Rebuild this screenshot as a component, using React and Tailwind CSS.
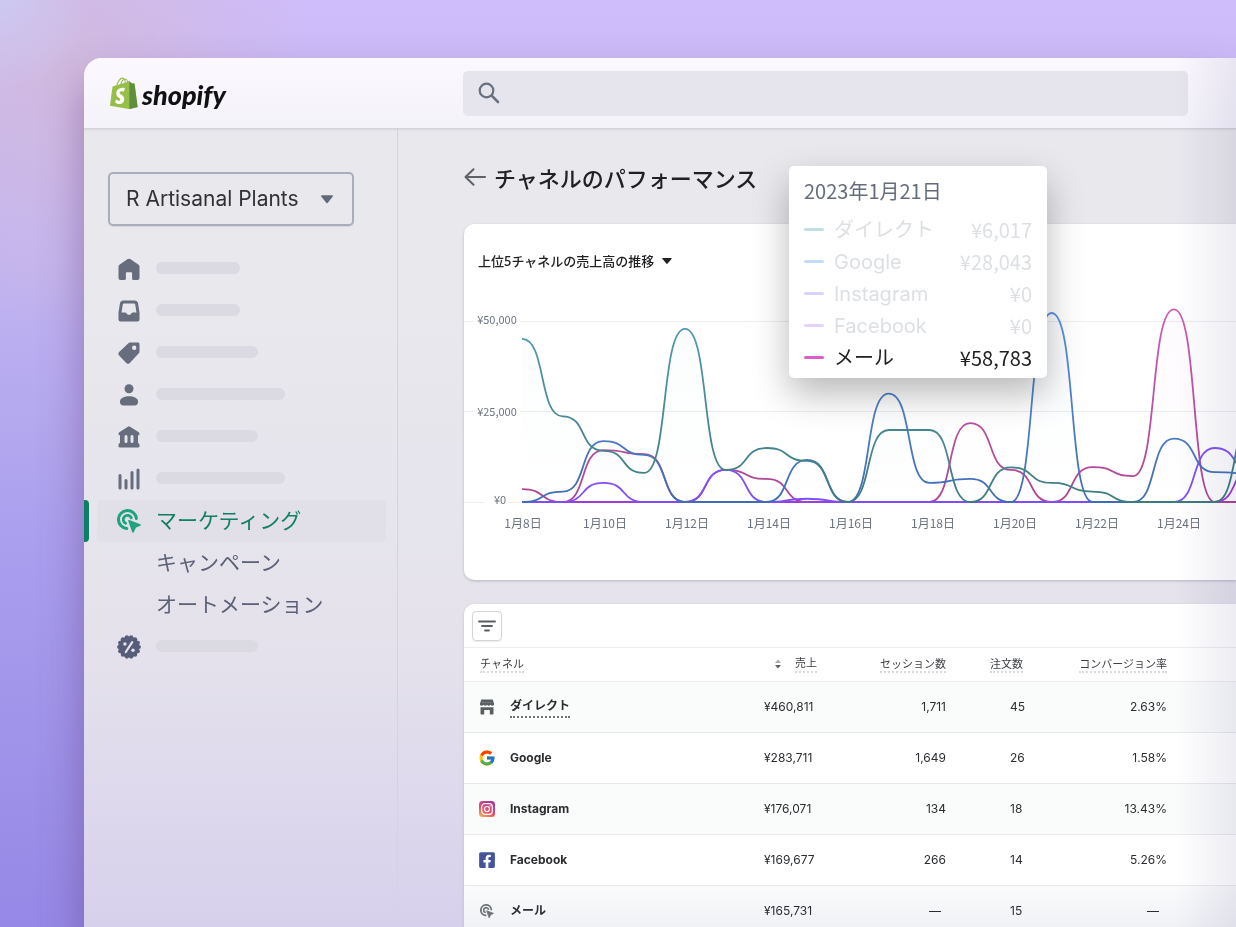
import React from "react";
import { FcGoogle } from "react-icons/fc";
import { FaFacebookSquare } from "react-icons/fa";

const series = [
  {
    id: "mail",
    values: [3.6, 0, 14.4, 13.3, 0, 8.9, 6.4, 0, 0, 0, 0, 21.9, 8.9, 0, 9.7, 7.2, 53.5, 0, 0],
    top: "#cc5cb8",
    bottom: "#ad4593",
  },
  {
    id: "facebook",
    values: [0, 0, 0, 0, 0, 0, 0, 0, 0, 0, 0, 0, 0, 0, 0, 0, 0, 0, 10.5],
    top: "#a855e8",
    bottom: "#9b3fdb",
  },
  {
    id: "instagram",
    values: [0, 0, 5.3, 0, 0, 8.9, 0, 0.9, 0, 0, 0, 0, 0, 0, 0, 0, 0, 15, 7.8],
    top: "#8a63ff",
    bottom: "#7f4df7",
  },
  {
    id: "google",
    values: [0, 2.9, 16.9, 13.1, 0, 0, 0, 11.7, 0, 30.1, 5.3, 6.4, 0, 52.5, 0, 0, 17.6, 8.3, 7.8],
    top: "#5a93e0",
    bottom: "#3f6db5",
  },
  {
    id: "direct",
    values: [45.3, 23.8, 14.2, 8.1, 48.1, 8.9, 15, 11.4, 0, 20, 20, 0, 9.6, 5.3, 2.9, 0, 0, 0, 25],
    top: "#559bb5",
    bottom: "#3d7b7d",
  },
];

const tooltipRows = [
  { name: "ダイレクト", amount: "¥6,017", dash: "bg-[#c0dfe4]", text: "text-[#dcdfe3]" },
  { name: "Google", amount: "¥28,043", dash: "bg-[#c3dcf8]", text: "text-[#dcdfe3]" },
  { name: "Instagram", amount: "¥0", dash: "bg-[#d9d2fb]", text: "text-[#dcdfe3]" },
  { name: "Facebook", amount: "¥0", dash: "bg-[#e5d2f8]", text: "text-[#dcdfe3]" },
  { name: "メール", amount: "¥58,783", dash: "bg-[#d95fc6]", text: "text-[#202123]" },
];

const BASE = 229;
const LEFT = 58;
const STEP = 40.75;

const linePath = (values) =>
  values
    .map((v, i) => {
      const x = LEFT + i * STEP;
      const y = BASE - v * 3.6;
      if (i === 0) return `M${x} ${y}`;
      const prevX = x - STEP;
      const prevY = BASE - values[i - 1] * 3.6;
      return `C${prevX + STEP * 0.6} ${prevY} ${x - STEP * 0.6} ${y} ${x} ${y}`;
    })
    .join("");

const Logo = () => (
  <a href="#home" aria-label="shopify" className="flex items-center gap-1">
    <svg viewBox="0 2 109 125" className="h-8 w-7">
      <path
        fill="#95bf47"
        fillRule="evenodd"
        d="M95.6 28.2c-.1-.6-.6-1-1.1-1-.5 0-9.3-.2-9.3-.2s-7.4-7.2-8.1-7.9c-.7-.7-2.2-.5-2.7-.3 0 0-1.4.4-3.7 1.1-.4-1.3-1-2.8-1.8-4.4-2.6-5-6.5-7.7-11.1-7.7-.3 0-.6 0-1 .1-.1-.2-.3-.3-.4-.5-2-2.2-4.6-3.2-7.7-3.1-6 .2-12 4.5-16.8 12.2-3.4 5.4-6 12.2-6.8 17.5-6.9 2.1-11.7 3.6-11.8 3.7-3.5 1.1-3.6 1.2-4 4.5C9 44.7 0 114.2 0 114.2l75.6 13.1 32.8-8.1S95.7 28.8 95.6 28.2zM67.2 21.2c-1.7.5-3.7 1.1-5.8 1.8 0-3-.4-7.3-1.8-10.9 4.6.8 6.8 6 7.6 9.1zM57.5 24.2c-4 1.2-8.3 2.6-12.7 3.9 1.2-4.7 3.6-9.4 6.4-12.5 1.1-1.1 2.6-2.4 4.3-3.2 1.7 3.6 2.1 8.6 2 11.8zM49.3 8.5c1.4 0 2.6.3 3.6 1-1.6.8-3.2 2.1-4.7 3.6-3.8 4.1-6.7 10.5-7.9 16.6-3.6 1.1-7.2 2.2-10.5 3.2C31.9 23.4 40.1 8.7 49.3 8.5z"
      />
      <path
        fill="#5e8e3e"
        d="M94.5 27.2c-.5 0-9.3-.2-9.3-.2s-7.4-7.2-8.1-7.9c-.3-.3-.7-.5-1.5-.5v108.7l32.8-8.1S95.7 28.8 95.6 28.2c-.1-.6-.6-1-1.1-1z"
      />
      <path
        fill="#fff"
        d="M58 44.9l-3.8 14.4s-4.3-2-9.4-1.6c-7.5.5-7.5 5.2-7.5 6.4.4 6.4 17.3 7.8 18.3 22.9.7 11.9-6.3 20-16.4 20.6-12.2.8-18.9-6.4-18.9-6.4l2.6-11s6.7 5.1 12.1 4.7c3.5-.2 4.8-3.1 4.7-5.1-.5-8.4-14.3-7.9-15.2-21.7-.7-11.6 6.9-23.4 23.7-24.4 6.6-.5 9.8 1.2 9.8 1.2z"
      />
    </svg>
    <span className="pt-1 font-['Lato',sans-serif] text-[27px] leading-8 font-black text-[#111] italic">shopify</span>
  </a>
);

const HomeIcon = () => (
  <svg viewBox="0 0 24 24" className="h-6 w-6" fill="currentColor">
    <path d="M10.7 2.1a2.4 2.4 0 0 1 2.6 0l7.9 5.3c.9.6 1.3 1.4 1.3 2.4V21a2 2 0 0 1-2 2h-4.2c-.7 0-1.2-.5-1.2-1.2v-5.6c0-.6-.4-1-1-1H9.900c-.6 0-1 .4-1 1v5.600c0 .7-.5 1.200-1.200 1.200H3.500a2 2 0 0 1-2-2V9.800c0-1 .4-1.800 1.300-2.400z" />
  </svg>
);

const InboxIcon = () => (
  <svg viewBox="0 0 24 24" className="h-6 w-6" fill="currentColor" fillRule="evenodd">
    <path d="M6.500 1.500h11c1.900 0 3.300 1.100 3.600 2.900l1.400 9.100V20.500a2 2 0 0 1-2 2h-17a2 2 0 0 1-2-2V13.500l1.400-9.100c.3-1.800 1.700-2.900 3.600-2.900zM7.100 4.500c-.7 0-1.200.4-1.300 1.100L4.500 13.600h3.700c.7 0 1.100.3 1.400.8.5.9 1.300 1.400 2.400 1.400s1.900-.5 2.400-1.400c.3-.5.7-.8 1.400-.8h3.700l-1.300-8c-.1-.7-.6-1.100-1.300-1.100z" />
  </svg>
);

const TagIcon = () => (
  <svg viewBox="0 0 24 24" className="h-6 w-6" fill="currentColor" fillRule="evenodd">
    <path d="M11.700 2.100c.5-.5 1.100-.6 1.800-.6h7.300c1 0 1.700.7 1.700 1.700v7.300c0 .7-.2 1.300-.7 1.800l-9 9.600a2.400 2.400 0 0 1-3.500 0l-7.200-7.500a2.300 2.300 0 0 1 0-3.300zM17.200 4.600a2.200 2.200 0 1 0 0 4.400 2.200 2.200 0 0 0 0-4.400z" />
  </svg>
);

const PersonIcon = () => (
  <svg viewBox="0 0 24 24" className="h-6 w-6" fill="currentColor">
    <circle cx="12" cy="5.800" r="4.500" />
    <path d="M3 18.200c0-3.300 5-5 9-5s9 1.700 9 5v.8c0 2-1.300 3.500-3.300 3.500H6.300C4.300 22.500 3 21 3 19z" />
  </svg>
);

const BankIcon = () => (
  <svg viewBox="0 0 24 24" className="h-6 w-6" fill="currentColor" fillRule="evenodd">
    <path d="M10.900 1.700a2 2 0 0 1 2.200 0l8.300 5.200c.7.400 1.100 1 1.100 1.800 0 1-.6 1.600-1.500 1.600V18c.9.200 1.500.9 1.500 1.800v1.500c0 .7-.5 1.200-1.200 1.200H2.700c-.7 0-1.200-.5-1.200-1.200v-1.500c0-.9.600-1.600 1.500-1.800v-7.700c-.9 0-1.500-.6-1.500-1.600 0-.8.400-1.400 1.100-1.800zM9 10a1.500 1.500 0 0 0-1.500 1.500v5a1.500 1.500 0 0 0 3 0v-5A1.500 1.500 0 0 0 9 10zM15 10a1.500 1.500 0 0 0-1.500 1.500v5a1.500 1.500 0 0 0 3 0v-5A1.500 1.500 0 0 0 15 10z" />
  </svg>
);

const BarsIcon = () => (
  <svg viewBox="0 0 24 24" className="h-6 w-6" fill="none" stroke="currentColor" strokeWidth="3" strokeLinecap="round">
    <path d="M3 8.500V21M9 13.500V21M15 5.500V21M21 3v18" />
  </svg>
);

const TargetIcon = ({ className }) => (
  <svg viewBox="0 0 24 24" className={className} fill="none" stroke="currentColor" strokeWidth="3" strokeLinecap="round">
    <path d="M9.700 19.500A9 9 0 1 1 19.400 9.500" />
    <path d="M8.600 14.300A4.200 4.200 0 1 1 14.300 8.800" strokeWidth="2.800" />
    <path
      d="M12 11.800l11 4.300-4.700 2L16 23z"
      fill="currentColor"
      strokeWidth="1.600"
      strokeLinejoin="round"
    />
  </svg>
);

const DiscountIcon = () => (
  <svg viewBox="0 0 24 24" className="h-6 w-6" fill="#575d78">
    <circle cx="12" cy="12" r="10.600" />
    {[...Array(14).keys()].map((n) => (
      <circle
        key={n}
        cx={12 + 9.800 * Math.cos((n * Math.PI) / 7)}
        cy={12 + 9.800 * Math.sin((n * Math.PI) / 7)}
        r="2.100"
      />
    ))}
    <path d="M8.800 17L15.200 7.200" stroke="#e6e4ee" strokeWidth="2.200" strokeLinecap="round" />
    <circle cx="7.900" cy="9" r="1.700" fill="#e6e4ee" />
    <circle cx="16" cy="15.300" r="1.700" fill="#e6e4ee" />
  </svg>
);

const StoreIcon = () => (
  <svg viewBox="0 0 16 16" className="h-4 w-4" fill="#5c5f62">
    <path d="M2.300.500h11.400l1.300 4v1.200a1.900 1.900 0 0 1-3.500 0 1.900 1.900 0 0 1-3.500 0 1.900 1.900 0 0 1-3.500 0 1.900 1.900 0 0 1-3.500 0V4.500z" />
    <path d="M1.500 8.200h13v6.300c0 .6-.4 1-1 1h-2.700v-4.600H5.200v4.600H2.500c-.6 0-1-.4-1-1z" />
    <path d="M3.200 3.500h9.600" stroke="#8c8f92" strokeWidth=".8" strokeDasharray="1.500 1" />
  </svg>
);

const InstagramIcon = () => (
  <svg viewBox="0 0 16 16" className="h-4 w-4" fill="none" stroke="#fff" strokeWidth="1.200">
    <defs>
      <linearGradient id="insta" x1="0.100" y1="1" x2="0.700" y2="0">
        <stop offset="0" stopColor="#f9b04f" />
        <stop offset="0.450" stopColor="#e2506a" />
        <stop offset="1" stopColor="#a3389c" />
      </linearGradient>
    </defs>
    <rect width="16" height="16" rx="3.500" fill="url(#insta)" stroke="none" />
    <rect x="2.700" y="2.700" width="10.600" height="10.600" rx="3" />
    <circle cx="8" cy="8" r="2.500" />
    <circle cx="11" cy="5" r=".7" fill="#fff" stroke="none" />
  </svg>
);

const menu = [
  { label: "ホーム", icon: <HomeIcon />, bar: "w-[84px]" },
  { label: "注文管理", icon: <InboxIcon />, bar: "w-[84px]" },
  { label: "商品管理", icon: <TagIcon />, bar: "w-[102px]" },
  { label: "顧客管理", icon: <PersonIcon />, bar: "w-[129px]" },
  { label: "財務", icon: <BankIcon />, bar: "w-[102px]" },
  { label: "ストア分析", icon: <BarsIcon />, bar: "w-[129px]" },
];

const channels = [
  { name: "ダイレクト", icon: <StoreIcon />, sales: "¥460,811", sessions: "1,711", orders: "45", rate: "2.63%" },
  { name: "Google", icon: <FcGoogle className="h-[18px] w-[18px]" />, sales: "¥283,711", sessions: "1,649", orders: "26", rate: "1.58%" },
  { name: "Instagram", icon: <InstagramIcon />, sales: "¥176,071", sessions: "134", orders: "18", rate: "13.43%" },
  { name: "Facebook", icon: <FaFacebookSquare className="h-[18px] w-[18px] text-[#43549c]" />, sales: "¥169,677", sessions: "266", orders: "14", rate: "5.26%" },
  { name: "メール", icon: <TargetIcon className="h-[14px] w-[14px] text-[#6d7175]" />, sales: "¥165,731", sessions: "—", orders: "15", rate: "—" },
];

const MenuRow = ({ item }) => (
  <li>
    <a href="#menu" aria-label={item.label} className="flex h-[42px] items-center gap-[15px] pl-[33px] text-[#676d7c]">
      {item.icon}
      <span className={`mb-[3px] h-3 rounded-full bg-[#dbd9e1] ${item.bar}`} />
    </a>
  </li>
);

const Sidebar = () => (
  <aside className="w-[314px] shrink-0 border-r border-[#d5d3de] pt-[43px]">
    <div className="relative ml-6 w-[246px]">
      <select
        aria-label="ストア"
        className="h-[54px] w-full appearance-none rounded-[5px] border-2 border-[#a9aebb] bg-transparent pl-4 text-[21px] text-[#303236] shadow-[0_1px_1px_rgba(0,0,0,0.08)]"
      >
        <option>R Artisanal Plants</option>
      </select>
      <svg viewBox="0 0 14 9" className="pointer-events-none absolute top-[23px] right-5 h-[9px] w-[14px]">
        <path d="M1.800 1h10.400L7 7.500z" fill="#626a79" stroke="#626a79" strokeWidth="1.500" strokeLinejoin="round" />
      </svg>
    </div>
    <nav className="mt-[22px] text-[21px] text-[#5c6178]">
      <ul>
        {menu.map((item) => (
          <MenuRow key={item.label} item={item} />
        ))}
        <li className="flex h-[42px] text-[#117f67]">
          <span className="w-[5px] rounded-r bg-[#0c7f67]" />
          <a
            href="#marketing"
            aria-current="page"
            className="mr-[11px] ml-2 flex flex-1 items-center gap-[15px] rounded bg-[#e1dfe7] pl-5"
          >
            <TargetIcon className="h-6 w-6 text-[#1fa37f]" />
            マーケティング
          </a>
        </li>
        <li>
          <a href="#campaigns" className="flex h-[42px] items-center pl-[72px]">キャンペーン</a>
        </li>
        <li>
          <a href="#automations" className="flex h-[42px] items-center pl-[72px]">オートメーション</a>
        </li>
        <MenuRow item={{ label: "ディスカウント", icon: <DiscountIcon />, bar: "w-[102px]" }} />
      </ul>
    </nav>
  </aside>
);

const Tooltip = () => (
  <div className="absolute -top-[58px] left-[325px] w-[258px] rounded-[5px] bg-white px-[15px] pt-[9px] pb-1 font-['Noto_Sans_CJK_JP',sans-serif] text-[20px] shadow-[0_16px_36px_rgba(0,0,0,0.28)]">
    <p className="leading-8 text-[#646d79]">2023年1月21日</p>
    <ul className="mt-[7px]">
      {tooltipRows.map((row) => (
        <li key={row.name} className={`flex h-8 items-center ${row.text}`}>
          <span className={`mr-[10px] mb-[2px] h-[3px] w-5 rounded-full ${row.dash}`} />
          <span className="font-['Inter','Noto_Sans_CJK_JP',sans-serif]">{row.name}</span>
          <span className="ml-auto">{row.amount}</span>
        </li>
      ))}
    </ul>
  </div>
);

const Chart = () => (
  <svg
    role="img"
    aria-label="上位5チャネルの売上高の推移"
    className="block h-[307px] w-full font-['Noto_Sans_CJK_JP',sans-serif]"
  >
    <defs>
      {series.map((s) => (
        <React.Fragment key={s.id}>
          <linearGradient id={`line-${s.id}`} gradientUnits="userSpaceOnUse" x1="0" y1="40" x2="0" y2={BASE}>
            <stop offset="0" stopColor={s.top} />
            <stop offset="1" stopColor={s.bottom} />
          </linearGradient>
          <linearGradient id={`area-${s.id}`} gradientUnits="userSpaceOnUse" x1="0" y1="40" x2="0" y2={BASE}>
            <stop offset="0" stopColor={s.top} stopOpacity="0.025" />
            <stop offset="1" stopColor={s.top} stopOpacity="0" />
          </linearGradient>
        </React.Fragment>
      ))}
    </defs>
    <g stroke="#ededef">
      <path d="M0 48.500H9M56 48.500H2000M0 138.500H9M56 138.500H2000M0 229.500H20M44 229.500H2000" />
    </g>
    <g className="fill-[#6b7280] text-[11px]" textAnchor="middle">
      <text x="33" y="51">¥50,000</text>
      <text x="33" y="143">¥25,000</text>
      <text x="36" y="231">¥0</text>
    </g>
    {series.map((s) => (
      <g key={s.id}>
        <path d={`${linePath(s.values)}V${BASE}H${LEFT}Z`} fill={`url(#area-${s.id})`} />
        <path d={linePath(s.values)} fill="none" stroke={`url(#line-${s.id})`} strokeWidth="1.800" />
      </g>
    ))}
    <g className="fill-[#6b7280] text-[12px]" textAnchor="middle">
      {[8, 10, 12, 14, 16, 18, 20, 22, 24].map((day, i) => (
        <text key={day} x={59 + i * 82} y="255">{`1月${day}日`}</text>
      ))}
    </g>
  </svg>
);

const heading = "border-b-2 border-dotted border-[#d8dadd]";

const ChannelTable = () => (
  <section className="mt-6 rounded-l-[10px] bg-white shadow-[0_1px_3px_rgba(0,0,0,0.15)]">
    <div className="flex h-11 items-center border-b border-[#edeef0] pl-2">
      <button
        type="button"
        aria-label="絞り込み"
        className="flex h-[30px] w-[30px] items-center justify-center rounded border border-[#d3d5d9] shadow-[0_1px_1px_rgba(0,0,0,0.08)]"
      >
        <svg viewBox="0 0 18 12" className="h-3 w-[18px]" stroke="#5c5f62" strokeWidth="1.800" strokeLinecap="round">
          <path d="M1 1.500h16M4 6h10M7 10.500h4" />
        </svg>
      </button>
    </div>
    <table className="w-full table-fixed text-left text-[12px] text-[#2b2d30]">
      <colgroup>
        <col className="w-[300px]" />
        <col className="w-[53px]" />
        <col className="w-[129px]" />
        <col className="w-[80px]" />
        <col className="w-[141px]" />
        <col />
      </colgroup>
      <thead>
        <tr className="h-[33px] border-b border-[#edeef0] text-[11px] leading-4 whitespace-nowrap text-[#3c3f43] [&_th]:font-normal">
          <th className="pl-4">
            <span className={heading}>チャネル</span>
          </th>
          <th>
            <button type="button" className="flex w-full items-center justify-end gap-[14px]">
              <svg viewBox="0 0 6 10" className="h-[10px] w-[6px]">
                <path d="M0 4L3 .500 6 4z" fill="#a7a9ad" />
                <path d="M0 6l3 3.500L6 6z" fill="#5c5f62" />
              </svg>
              <span className={heading}>売上</span>
            </button>
          </th>
          <th className="text-right">
            <span className={heading}>セッション数</span>
          </th>
          <th className="pl-11">
            <span className={heading}>注文数</span>
          </th>
          <th className="text-right">
            <span className={heading}>コンバージョン率</span>
          </th>
          <th />
        </tr>
      </thead>
      <tbody>
        {channels.map((c, i) => (
          <tr
            key={c.name}
            className="h-[51px] border-b border-[#e9eaec] odd:bg-[#fafbfb] last:bg-linear-to-b last:from-[#fafbfb] last:to-[#eff0f5]"
          >
            <td className="pl-[14px]">
              <div className="flex items-center gap-[14px]">
                <span className="flex w-[18px] justify-center">{c.icon}</span>
                {i === 0 ? (
                  <a href="#direct" className="border-b-2 border-dotted border-[#6d7175] leading-5 font-bold">
                    {c.name}
                  </a>
                ) : (
                  <span className="font-bold">{c.name}</span>
                )}
              </div>
            </td>
            <td>{c.sales}</td>
            <td className={c.sessions === "—" ? "pr-[5px] text-right" : "text-right"}>{c.sessions}</td>
            <td className="pl-16">{c.orders}</td>
            <td className={c.rate === "—" ? "pr-2 text-right" : "text-right"}>{c.rate}</td>
            <td />
          </tr>
        ))}
      </tbody>
    </table>
  </section>
);

const App = () => {
  return (
    <div className="h-screen overflow-hidden bg-[radial-gradient(circle_at_0_0,#cdc9f1_0,transparent_90px),radial-gradient(ellipse_240px_260px_at_70px_70px,#d1bade_0,transparent_100%),linear-gradient(to_bottom,#cfbcfa_0,#c0b3f0_30%,#aa9fee_58%,#9588e6_100%)] pt-[58px] pl-[84px] font-['Inter','Noto_Sans_CJK_JP',sans-serif]">
      <div className="relative flex h-full flex-col overflow-hidden rounded-tl-[18px] bg-linear-to-b from-[#e9e8ed] from-30% via-[#e4e1ec] via-70% to-[#d7d0ec] shadow-[0_24px_44px_rgba(90,50,110,0.45)]">
        <header className="z-10 flex h-[71px] shrink-0 items-center border-b border-[#d3d1da] bg-linear-to-b from-[#fbf8fe] to-[#f5f3fa] pr-12 pl-[26px] shadow-[0_1px_2px_rgba(0,0,0,0.08)]">
          <div className="w-[353px] shrink-0">
            <Logo />
          </div>
          <label className="flex h-[45px] flex-1 items-center rounded-[5px] bg-[#e6e5ee] px-[15px]">
            <svg viewBox="0 0 22 22" className="h-[22px] w-[22px]" fill="none" stroke="#697080">
              <circle cx="8.500" cy="8.500" r="6.800" strokeWidth="2.200" />
              <path d="M13.700 13.700l6.300 6.300" strokeWidth="2.600" strokeLinecap="round" />
            </svg>
            <input type="search" aria-label="検索" className="ml-3 h-full flex-1 bg-transparent outline-none" />
          </label>
        </header>

        <div className="flex min-h-0 flex-1 text-[#697080]">
          <Sidebar />
          <main className="min-w-0 flex-1 pt-8 pl-[66px]">
            <div className="flex h-9 items-center gap-2">
              <a href="#back" aria-label="戻る">
                <svg viewBox="0 0 22 18" className="mb-1 h-[18px] w-[22px]" fill="none" stroke="#5f6266" strokeWidth="2" strokeLinecap="round" strokeLinejoin="round">
                  <path d="M9.500 1.200L1.500 9l8 7.800M1.500 9H21" />
                </svg>
              </a>
              <h1 className="text-[22px] font-medium text-[#202123]">チャネルのパフォーマンス</h1>
            </div>

            <section className="relative mt-[27px] rounded-l-[10px] bg-white pt-[25px] shadow-[0_1px_3px_rgba(0,0,0,0.2)]">
              <button
                type="button"
                aria-haspopup="true"
                className="flex h-6 items-center gap-2 pl-[14px] font-['Noto_Sans_CJK_JP',sans-serif] text-[13px] font-medium text-[#202123]"
              >
                上位5チャネルの売上高の推移
                <svg viewBox="0 0 10 6" className="h-[6px] w-[10px]" fill="#202123">
                  <path d="M1 0h8q1 .2.500 1L5.600 5.600q-.6.600-1.200 0L.5 1Q0 .2 1 0z" />
                </svg>
              </button>
              <Chart />
              <Tooltip />
            </section>

            <ChannelTable />
          </main>
        </div>

        {/* soft tint along the right edge */}
        <div className="pointer-events-none absolute inset-y-0 right-0 z-20 w-[60px] bg-linear-to-r from-white to-[#ededf3] mix-blend-multiply" />
      </div>
    </div>
  );
};

export default App;
